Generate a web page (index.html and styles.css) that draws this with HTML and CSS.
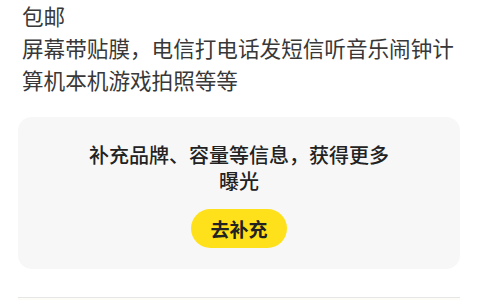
FILE: index.html
```html
<!DOCTYPE html>
<html lang="zh-CN">
  <head>
    <meta charset="utf-8">
    <title>商品描述</title>
    <link rel="stylesheet" href="styles.css">
  </head>
  <body>
	<div class="wrapper">
		<div class="desc">
			<p>包邮</p>
			<p>屏幕带贴膜，电信打电话发短信听音乐闹钟计算机本机游戏拍照等等</p>
		</div>

		<div class="tipCard">
			<div class="tipText">补充品牌、容量等信息，获得更多曝光</div>
			<button class="fillBtn">去补充</button>
		</div>

		<div class="nextCard"></div>
	</div>
  </body>
</html>
```

FILE: styles.css
```css
body{
	margin:0;
	background:#fff;
	font-family:"Noto Sans CJK SC","Noto Sans",sans-serif;
}
.wrapper{
	padding:0 22px;
}
.desc p{
	margin:0;
	font-size:21.6px;
	line-height:32px;
	color:#383838;
}
.tipCard{
	margin-top:21px;
	margin-left:-4px;
	margin-right:-2px;
	padding:25px 64px 21px;
	background:#f7f7f7;
	border-radius:14px;
	display:flex;
	flex-direction:column;
	align-items:center;
}
.tipText{
	font-size:20px;
	line-height:26px;
	font-weight:500;
	color:#222;
	text-align:center;
}
.fillBtn{
	margin-top:15px;
	width:96px;
	height:39px;
	border:0;
	border-radius:20px;
	background:#ffe11b;
	font-family:inherit;
	font-size:19px;
	font-weight:600;
	color:#222;
	cursor:pointer;
}
.nextCard{
	margin-top:28px;
	margin-left:-4px;
	margin-right:-2px;
	height:2px;
	background:#fdfcf6;
	border-top:1px solid #e6e6e6;
}
```
